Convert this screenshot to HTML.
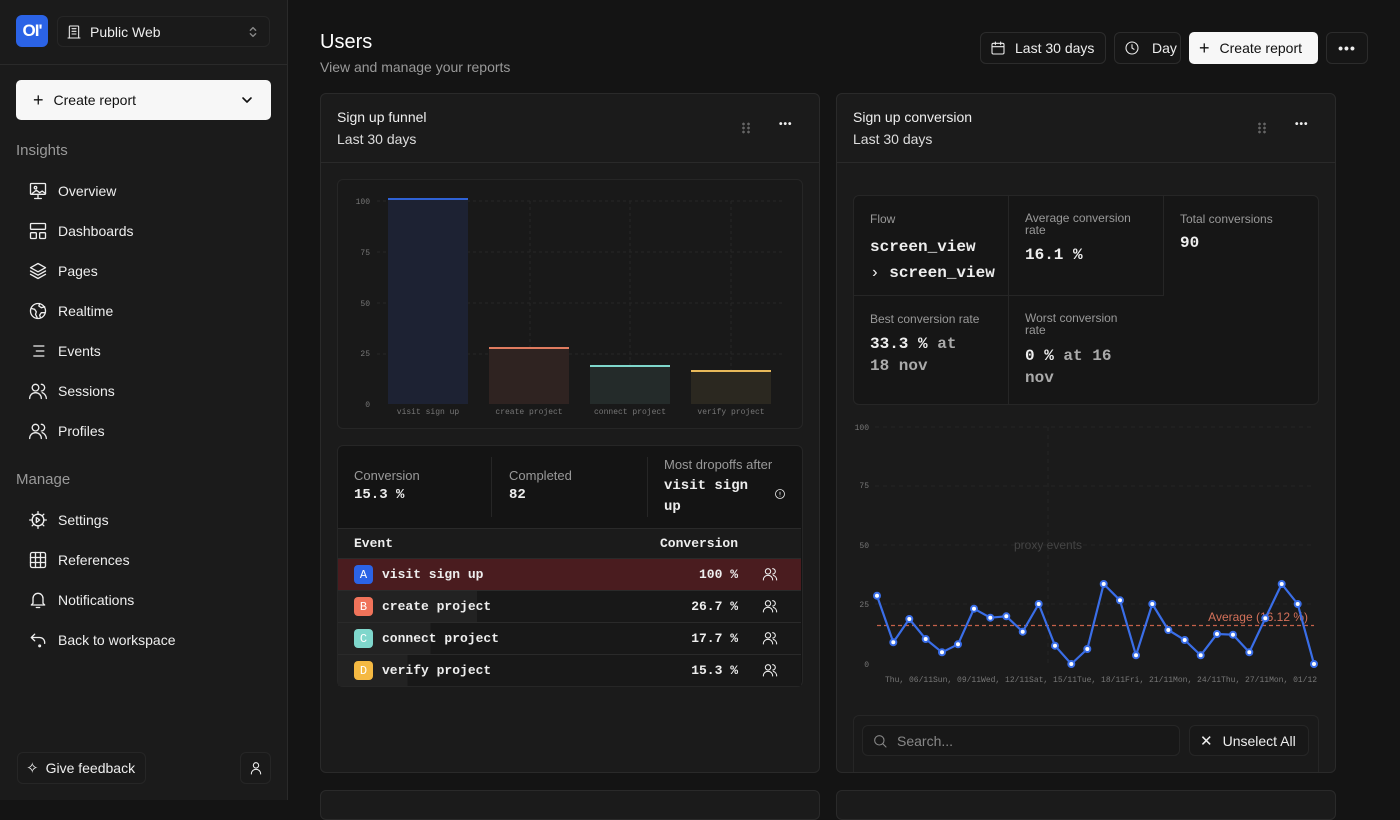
<!DOCTYPE html>
<html><head><meta charset="utf-8"><style>
*{box-sizing:border-box;margin:0;padding:0}
body{width:1400px;height:800px;overflow:hidden;background:#141414;font-family:"Liberation Sans",sans-serif;color:#eee;position:relative}
.a{position:absolute}
.mono{font-family:"Liberation Mono",monospace}
.sb{left:0;top:0;width:288px;height:800px;background:#1b1b1b;border-right:1px solid #2a2a2a}
.nav{position:absolute;left:28px;font-size:14px;color:#eee;display:flex;align-items:center;gap:10px}
.nav svg{width:20px;height:20px;fill:none;stroke:#eee;stroke-width:1.6;stroke-linecap:round;stroke-linejoin:round}
.sec{position:absolute;left:16px;font-size:15px;color:#999}
.btn{position:absolute;border:1px solid #2c2c2c;background:#1a1a1a;border-radius:6px;display:flex;align-items:center;font-size:14px;color:#eee}
.card{position:absolute;background:#1b1b1b;border:1px solid #2a2a2a;border-radius:6px}
.ico{fill:none;stroke:currentColor;stroke-width:1.6;stroke-linecap:round;stroke-linejoin:round}
.row{position:absolute;left:338px;width:463px;height:32px;border-top:1px solid #2a2a2a;display:flex;align-items:center;font-family:"Liberation Mono",monospace;font-weight:bold;font-size:13px}
.badge{width:19px;height:19px;border-radius:4px;margin-left:16px;margin-right:9px;color:#fff;font-size:12px;display:flex;align-items:center;justify-content:center;font-weight:normal}
.lbl{font-size:12px;color:#999}
.dots{position:absolute;width:10px;height:12px;background:radial-gradient(circle,#666 1.2px,transparent 1.5px) 0 0/5px 4px}
</style></head><body>
<!-- sidebar -->
<div class="a sb"></div>
<div class="a" style="left:16px;top:15px;width:32px;height:32px;background:#2b63e6;border-radius:6px;color:#fff;font-weight:bold;font-size:17px;display:flex;align-items:center;justify-content:center;letter-spacing:-1px">OI'</div>
<div class="btn" style="left:57px;top:16px;width:213px;height:31px;border-color:#262626">
<svg class="ico" style="margin-left:8px" width="16" height="16" viewBox="0 0 24 24"><rect x="5" y="3" width="14" height="18" rx="1"/><path d="M9 7h6M9 11h6M9 15h6M3 21h18"/></svg>
<span style="margin-left:8px;font-size:14px">Public Web</span>
<svg class="ico" style="margin-left:auto;margin-right:10px;color:#888" width="12" height="14" viewBox="0 0 12 16"><path d="M3 6l3-3 3 3M3 10l3 3 3-3"/></svg></div>
<div class="a" style="left:0;top:64px;width:287px;height:1px;background:#2a2a2a"></div>
<div class="a" style="left:16px;top:80px;width:255px;height:40px;background:#f7f7f7;border-radius:5px;color:#111;display:flex;align-items:center;font-size:14px">
<span style="margin-left:17px;font-size:18px;font-weight:300">+</span><span style="margin-left:10px">Create report</span>
<svg class="ico" style="margin-left:auto;margin-right:18px" width="12" height="12" viewBox="0 0 12 12"><path d="M2 4l4 4 4-4"/></svg></div>
<div class="sec" style="top:142px">Insights</div>
<div class="nav" style="top:181px"><svg viewBox="0 0 24 24"><rect x="3" y="3" width="18" height="13" rx="1"/><circle cx="9" cy="8" r="1.5"/><path d="M5 15l5-4 4 3 3-2 4 3M12 16v4M8 21h8"/></svg>Overview</div>
<div class="nav" style="top:221px"><svg viewBox="0 0 24 24"><rect x="3" y="3" width="18" height="7" rx="1"/><rect x="3" y="14" width="7" height="7" rx="1"/><rect x="14" y="14" width="7" height="7" rx="1"/></svg>Dashboards</div>
<div class="nav" style="top:261px"><svg viewBox="0 0 24 24"><path d="M12 3l9 5-9 5-9-5z"/><path d="M3 12l9 5 9-5M3 16l9 5 9-5"/></svg>Pages</div>
<div class="nav" style="top:301px"><svg viewBox="0 0 24 24"><circle cx="12" cy="12" r="9"/><path d="M4 9l4 1 2 3-1 3 2 4M14 3l-1 3 3 2 4-1M20 14l-4 0-2 3 1 3"/></svg>Realtime</div>
<div class="nav" style="top:341px"><svg viewBox="0 0 24 24"><path d="M7 6h12M10 12h9M7 18h12"/></svg>Events</div>
<div class="nav" style="top:381px"><svg viewBox="0 0 24 24"><circle cx="9" cy="8" r="4"/><path d="M2 21c0-4 3-7 7-7s7 3 7 7M16 4a4 4 0 010 8M22 21c0-3-2-6-5-7"/></svg>Sessions</div>
<div class="nav" style="top:421px"><svg viewBox="0 0 24 24"><circle cx="9" cy="8" r="4"/><path d="M2 21c0-4 3-7 7-7s7 3 7 7M16 4a4 4 0 010 8M22 21c0-3-2-6-5-7"/></svg>Profiles</div>
<div class="sec" style="top:471px">Manage</div>
<div class="nav" style="top:510px"><svg viewBox="0 0 24 24"><circle cx="12" cy="12" r="7"/><path d="M12 2v3M12 19v3M2 12h3M19 12h3M5 5l2 2M17 17l2 2M5 19l2-2M17 7l2-2M10 9l4 3-4 3z"/></svg>Settings</div>
<div class="nav" style="top:550px"><svg viewBox="0 0 24 24"><rect x="3" y="3" width="18" height="18" rx="2"/><path d="M9 3v18M15 3v18M3 9h18M3 15h18"/></svg>References</div>
<div class="nav" style="top:590px"><svg viewBox="0 0 24 24"><path d="M6 16V10a6 6 0 0112 0v6l2 2H4zM10 21h4"/></svg>Notifications</div>
<div class="nav" style="top:630px"><svg viewBox="0 0 24 24"><path d="M4 9l4-4M4 9l4 4M4 9h10a6 6 0 016 6v1"/><circle cx="14" cy="19" r="1"/></svg>Back to workspace</div>
<div class="btn" style="left:17px;top:752px;width:129px;height:32px;border-color:#262626"><span style="margin-left:8px;font-size:15px">✧</span><span style="margin-left:7px">Give feedback</span></div>
<div class="btn" style="left:240px;top:752px;width:31px;height:32px;border-color:#262626;justify-content:center"><svg class="ico" width="16" height="16" viewBox="0 0 24 24"><circle cx="12" cy="8" r="4"/><path d="M5 21c0-4 3-7 7-7s7 3 7 7"/></svg></div>

<!-- header -->
<div class="a" style="left:320px;top:31px;font-size:20px;color:#fff">Users</div>
<div class="a" style="left:320px;top:59px;font-size:14px;color:#999">View and manage your reports</div>
<div class="btn" style="left:980px;top:32px;width:126px;height:32px;background:#161616"><svg class="ico" style="margin-left:9px" width="16" height="16" viewBox="0 0 24 24"><rect x="3" y="5" width="18" height="16" rx="2"/><path d="M8 3v4M16 3v4M3 10h18"/></svg><span style="margin-left:9px">Last 30 days</span></div>
<div class="btn" style="left:1114px;top:32px;width:67px;height:32px;background:#161616"><svg class="ico" style="margin-left:9px" width="16" height="16" viewBox="0 0 24 24"><circle cx="12" cy="12" r="9"/><path d="M12 7v5l3 2"/></svg><span style="margin-left:12px">Day</span></div>
<div class="a" style="left:1189px;top:32px;width:129px;height:32px;background:#f7f7f7;border-radius:5px;color:#111;font-size:14px;display:flex;align-items:center"><span style="margin-left:10px;font-size:18px;font-weight:300">+</span><span style="margin-left:10px">Create report</span></div>
<div class="btn" style="left:1326px;top:32px;width:42px;height:32px;background:#161616;justify-content:center;font-weight:bold;letter-spacing:1px">•••</div>

<!-- cards -->
<div class="card" style="left:320px;top:93px;width:500px;height:680px"></div>
<div class="card" style="left:836px;top:93px;width:500px;height:680px"></div>
<div class="a" style="left:320px;top:162px;width:500px;height:1px;background:#2a2a2a"></div>
<div class="a" style="left:836px;top:162px;width:500px;height:1px;background:#2a2a2a"></div>
<div class="a" style="left:337px;top:109px;font-size:14px">Sign up funnel</div>
<div class="a" style="left:337px;top:131px;font-size:14px;color:#ddd">Last 30 days</div>
<div class="dots" style="left:741px;top:122px"></div>
<div class="a" style="left:779px;top:119px;font-size:10px;font-weight:bold;letter-spacing:1px">•••</div>
<div class="dots" style="left:1257px;top:122px"></div>
<div class="a" style="left:1295px;top:119px;font-size:10px;font-weight:bold;letter-spacing:1px">•••</div>

<div class="a" style="left:337px;top:179px;width:466px;height:250px;border:1px solid #262626;border-radius:6px;background:#191919"></div>
<svg class="a" style="left:337px;top:179px" width="466" height="250">
<g stroke="#262626" stroke-dasharray="3 3"><line x1="40" y1="22" x2="445" y2="22"/><line x1="40" y1="73" x2="445" y2="73"/><line x1="40" y1="124" x2="445" y2="124"/><line x1="40" y1="175" x2="445" y2="175"/><line x1="92" y1="22" x2="92" y2="225"/><line x1="193" y1="22" x2="193" y2="225"/><line x1="293" y1="22" x2="293" y2="225"/><line x1="394" y1="22" x2="394" y2="225"/></g>
<g font-family="Liberation Mono" font-size="8" fill="#777" text-anchor="end"><text x="33" y="25">100</text><text x="33" y="76">75</text><text x="33" y="127">50</text><text x="33" y="177">25</text><text x="33" y="228">0</text></g>
<rect x="51" y="20" width="80" height="205" fill="#1d2233"/><rect x="51" y="19" width="80" height="2" fill="#2f62d6"/>
<rect x="152" y="169" width="80" height="56" fill="#2f2321"/><rect x="152" y="168" width="80" height="2" fill="#e07b5f"/>
<rect x="253" y="187" width="80" height="38" fill="#242b2a"/><rect x="253" y="186" width="80" height="2" fill="#7fd7cc"/>
<rect x="354" y="192" width="80" height="33" fill="#2b2820"/><rect x="354" y="191" width="80" height="2" fill="#e8b95a"/>
<g font-family="Liberation Mono" font-size="8" fill="#777" text-anchor="middle"><text x="91" y="235">visit sign up</text><text x="192" y="235">create project</text><text x="293" y="235">connect project</text><text x="394" y="235">verify project</text></g>
</svg>

<div class="a" style="left:337px;top:445px;width:466px;height:242px;border:1px solid #262626;border-radius:6px;background:#141414"></div>
<div class="a" style="left:491px;top:457px;width:1px;height:60px;background:#262626"></div>
<div class="a" style="left:647px;top:457px;width:1px;height:60px;background:#262626"></div>
<div class="a" style="left:354px;top:468px;font-size:13px;color:#999">Conversion</div>
<div class="a mono" style="left:354px;top:487px;font-size:14px;font-weight:bold">15.3 %</div>
<div class="a" style="left:509px;top:468px;font-size:13px;color:#999">Completed</div>
<div class="a mono" style="left:509px;top:487px;font-size:14px;font-weight:bold">82</div>
<div class="a" style="left:664px;top:457px;font-size:13px;color:#999">Most dropoffs after</div>
<div class="a mono" style="left:664px;top:476px;font-size:14px;font-weight:bold;line-height:21px">visit sign<br>up</div>
<svg class="a ico" style="left:774px;top:488px" width="12" height="12" viewBox="0 0 24 24"><circle cx="12" cy="12" r="9"/><path d="M12 8v5M12 16v.5"/></svg>
<div class="row" style="top:528px;height:30px;background:#1b1b1b"><span style="margin-left:16px">Event</span><span style="margin-left:auto;margin-right:63px">Conversion</span></div>
<div class="row" style="top:558px;background:#4a1c1f"><div class="badge" style="background:#2b63e6">A</div>visit sign up<span style="margin-left:auto;margin-right:63px">100 %</span></div>
<div class="row" style="top:590px;background:linear-gradient(90deg,#222 0 30%,#181818 30%)"><div class="badge" style="background:#f0735a">B</div>create project<span style="margin-left:auto;margin-right:63px">26.7 %</span></div>
<div class="row" style="top:622px;background:linear-gradient(90deg,#222 0 20%,#181818 20%)"><div class="badge" style="background:#7fd7cc">C</div>connect project<span style="margin-left:auto;margin-right:63px">17.7 %</span></div>
<div class="row" style="top:654px;background:linear-gradient(90deg,#222 0 15%,#181818 15%)"><div class="badge" style="background:#f5b942">D</div>verify project<span style="margin-left:auto;margin-right:63px">15.3 %</span></div>
<svg class="a ico" style="left:762px;top:566px" width="16" height="16" viewBox="0 0 24 24"><circle cx="9" cy="8" r="4"/><path d="M2 21c0-4 3-7 7-7s7 3 7 7M16 4a4 4 0 010 8M22 21c0-3-2-6-5-7"/></svg>
<svg class="a ico" style="left:762px;top:598px" width="16" height="16" viewBox="0 0 24 24"><circle cx="9" cy="8" r="4"/><path d="M2 21c0-4 3-7 7-7s7 3 7 7M16 4a4 4 0 010 8M22 21c0-3-2-6-5-7"/></svg>
<svg class="a ico" style="left:762px;top:630px" width="16" height="16" viewBox="0 0 24 24"><circle cx="9" cy="8" r="4"/><path d="M2 21c0-4 3-7 7-7s7 3 7 7M16 4a4 4 0 010 8M22 21c0-3-2-6-5-7"/></svg>
<svg class="a ico" style="left:762px;top:662px" width="16" height="16" viewBox="0 0 24 24"><circle cx="9" cy="8" r="4"/><path d="M2 21c0-4 3-7 7-7s7 3 7 7M16 4a4 4 0 010 8M22 21c0-3-2-6-5-7"/></svg>

<!-- right card content -->
<div class="a" style="left:853px;top:109px;font-size:14px">Sign up conversion</div>
<div class="a" style="left:853px;top:131px;font-size:14px;color:#ddd">Last 30 days</div>

<div class="a" style="left:853px;top:195px;width:466px;height:210px;border:1px solid #262626;border-radius:6px;background:#161616"></div>
<div class="a" style="left:1008px;top:196px;width:1px;height:208px;background:#262626"></div>
<div class="a" style="left:1163px;top:196px;width:1px;height:99px;background:#262626"></div>
<div class="a" style="left:854px;top:295px;width:310px;height:1px;background:#262626"></div>
<div class="a lbl" style="left:870px;top:212px">Flow</div>
<div class="a mono" style="left:870px;top:234px;font-size:16px;font-weight:bold;line-height:26px">screen_view<br><span style="font-weight:normal">›</span> screen_view</div>
<div class="a lbl" style="left:1025px;top:212px;line-height:12px">Average conversion<br>rate</div>
<div class="a mono" style="left:1025px;top:246px;font-size:16px;font-weight:bold">16.1 %</div>
<div class="a lbl" style="left:1180px;top:212px">Total conversions</div>
<div class="a mono" style="left:1180px;top:234px;font-size:16px;font-weight:bold">90</div>
<div class="a lbl" style="left:870px;top:312px">Best conversion rate</div>
<div class="a mono" style="left:870px;top:333px;font-size:16px;font-weight:bold;line-height:22px">33.3 % <span style="color:#aaa">at<br>18 nov</span></div>
<div class="a lbl" style="left:1025px;top:312px;line-height:12px">Worst conversion<br>rate</div>
<div class="a mono" style="left:1025px;top:345px;font-size:16px;font-weight:bold;line-height:22px">0 % <span style="color:#aaa">at 16<br>nov</span></div>

<svg class="a" style="left:840px;top:410px" width="480" height="280">
<g stroke="#262626" stroke-dasharray="4 4"><line x1="35" y1="17" x2="475" y2="17"/><line x1="35" y1="76" x2="475" y2="76"/><line x1="35" y1="135" x2="475" y2="135"/><line x1="35" y1="194" x2="475" y2="194"/><line x1="208" y1="17" x2="208" y2="255"/></g>
<g font-family="Liberation Mono" font-size="8" fill="#777" text-anchor="end"><text x="29" y="20">100</text><text x="29" y="78">75</text><text x="29" y="138">50</text><text x="29" y="197">25</text><text x="29" y="257">0</text></g>
<text x="208" y="139" font-size="12" fill="#444" text-anchor="middle">proxy events</text>
<line x1="37" y1="215.5" x2="474" y2="215.5" stroke="#c4604a" stroke-width="1.3" stroke-dasharray="4 3"/>
<text x="468" y="211" font-size="12" fill="#d4715a" text-anchor="end">Average (16.12 %)</text>
<polyline fill="none" stroke="#3a6ee8" stroke-width="2.2" stroke-linejoin="round" points="37,185.7 53.3,232.3 69.3,209 85.7,229 102,242.3 118,234.3 134,198.7 150.3,207.7 166.3,206.3 182.7,221.7 198.7,194 215,235.7 231.3,254 247.3,239 263.7,174 280,190.3 296,245.3 312.3,194 328.3,220 344.7,230 360.7,245.3 377,224 393,224.7 409.3,242.3 425.3,208.3 441.7,174 457.7,194 474,254"/>
<g fill="#fff" stroke="#3a6ee8" stroke-width="2"><circle cx="37" cy="185.7" r="3"/><circle cx="53.3" cy="232.3" r="3"/><circle cx="69.3" cy="209" r="3"/><circle cx="85.7" cy="229" r="3"/><circle cx="102" cy="242.3" r="3"/><circle cx="118" cy="234.3" r="3"/><circle cx="134" cy="198.7" r="3"/><circle cx="150.3" cy="207.7" r="3"/><circle cx="166.3" cy="206.3" r="3"/><circle cx="182.7" cy="221.7" r="3"/><circle cx="198.7" cy="194" r="3"/><circle cx="215" cy="235.7" r="3"/><circle cx="231.3" cy="254" r="3"/><circle cx="247.3" cy="239" r="3"/><circle cx="263.7" cy="174" r="3"/><circle cx="280" cy="190.3" r="3"/><circle cx="296" cy="245.3" r="3"/><circle cx="312.3" cy="194" r="3"/><circle cx="328.3" cy="220" r="3"/><circle cx="344.7" cy="230" r="3"/><circle cx="360.7" cy="245.3" r="3"/><circle cx="377" cy="224" r="3"/><circle cx="393" cy="224.7" r="3"/><circle cx="409.3" cy="242.3" r="3"/><circle cx="425.3" cy="208.3" r="3"/><circle cx="441.7" cy="174" r="3"/><circle cx="457.7" cy="194" r="3"/><circle cx="474" cy="254" r="3"/></g>
<text x="45" y="272" font-family="Liberation Mono" font-size="8" fill="#777">Thu, 06/11Sun, 09/11Wed, 12/11Sat, 15/11Tue, 18/11Fri, 21/11Mon, 24/11Thu, 27/11Mon, 01/12</text>
</svg>

<div class="a" style="left:853px;top:715px;width:466px;height:57px;border:1px solid #262626;border-bottom:none;border-radius:6px 6px 0 0;background:#1a1a1a"></div>
<div class="btn" style="left:862px;top:725px;width:318px;height:31px;background:#181818;border-color:#262626;color:#888"><svg class="ico" style="margin-left:9px" width="16" height="16" viewBox="0 0 24 24"><circle cx="11" cy="11" r="7"/><path d="M16 16l5 5"/></svg><span style="margin-left:9px">Search...</span></div>
<div class="btn" style="left:1189px;top:725px;width:120px;height:31px;background:#181818;border-color:#262626;font-size:14px"><span style="margin-left:10px;font-size:15px">✕</span><span style="margin-left:10px">Unselect All</span></div>

<!-- next cards peek -->
<div class="card" style="left:320px;top:790px;width:500px;height:30px"></div>
<div class="card" style="left:836px;top:790px;width:500px;height:30px"></div>
</body></html>
